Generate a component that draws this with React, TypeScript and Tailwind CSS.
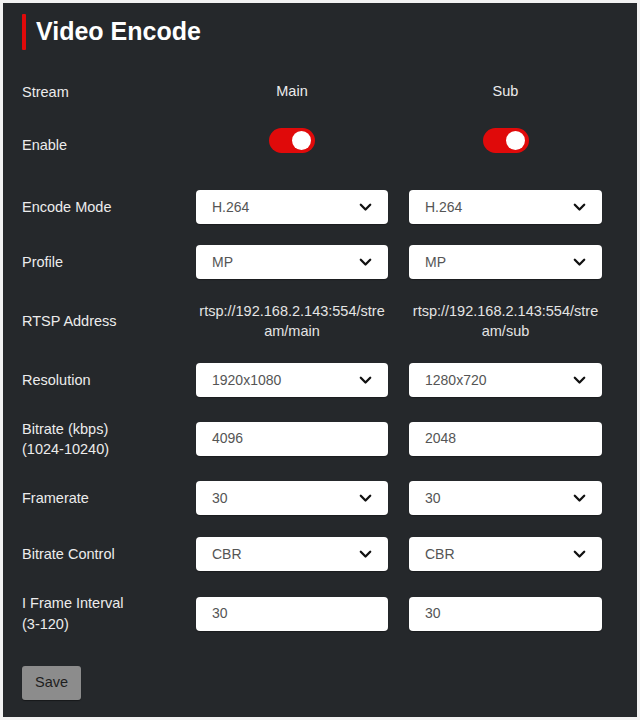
import React from "react";

const font = { fontFamily: '"Liberation Sans", Arial, sans-serif' };

function Chevron() {
  return (
    <svg width="13" height="9" viewBox="0 0 13 9" className="shrink-0">
      <path d="M1.8 1.8 L6.5 6.5 L11.2 1.8" fill="none" stroke="#111" strokeWidth="2.3" strokeLinecap="round" strokeLinejoin="round" />
    </svg>
  );
}

function Select({ value }: { value: string }) {
  return (
    <div className="h-[34px] bg-white rounded-[4px] flex items-center justify-between pl-4 pr-[16px] text-[14px] text-[#555] shadow-[0_1px_1px_rgba(0,0,0,0.3)]">
      <span>{value}</span>
      <Chevron />
    </div>
  );
}

function Input({ value }: { value: string }) {
  return (
    <div className="h-[34px] bg-white rounded-[4px] flex items-center pl-4 text-[14px] text-[#555] shadow-[0_1px_1px_rgba(0,0,0,0.3)]">
      <span className="-mt-[2px]">{value}</span>
    </div>
  );
}

function Toggle() {
  return (
    <div className="w-[46px] h-[25px] rounded-full bg-[#e00a0a] flex items-center justify-end pr-[4px]">
      <div className="w-[19px] h-[19px] rounded-full bg-white" />
    </div>
  );
}

function Row({ label, children, className = "" }: { label: React.ReactNode; children: React.ReactNode; className?: string }) {
  return (
    <div className={"grid grid-cols-[153px_192px_193px] gap-x-[21px] items-center " + className}>
      <div className="text-[14.5px] leading-[20px] text-[#ececec]">{label}</div>
      {children}
    </div>
  );
}

export default function App() {
  return (
    <div className="bg-[#f2f2f2] p-[3px] w-[640px] h-[720px]" style={font}>
      <div className="bg-[#25282b] h-[714px] px-[19px] flex flex-col">
        <div className="flex items-center mt-[11px] h-[36px]">
          <div className="w-[4px] h-[36px] bg-[#e00a0a] rounded-[1px]" />
          <div className="ml-[10px] text-[25px] font-bold text-white leading-none -mt-[1px]">Video Encode</div>
        </div>

        <Row label="Stream" className="mt-[25px] h-[34px]">
          <div className="text-center text-[14.5px] text-[#ececec]">Main</div>
          <div className="text-center text-[14.5px] text-[#ececec]">Sub</div>
        </Row>

        <Row label="Enable" className="mt-[19px] h-[34px]">
          <div className="flex justify-center self-start -ml-[1px]">
            <Toggle />
          </div>
          <div className="flex justify-center self-start">
            <Toggle />
          </div>
        </Row>

        <Row label="Encode Mode" className="mt-[28px] h-[34px]">
          <Select value="H.264" />
          <Select value="H.264" />
        </Row>

        <Row label="Profile" className="mt-[21px] h-[34px]">
          <Select value="MP" />
          <Select value="MP" />
        </Row>

        <Row label="RTSP Address" className="mt-[22px] h-[40px]">
          <div className="text-center text-[14.5px] leading-[20px] text-[#e4e4e4] break-all">rtsp://192.168.2.143:554/stream/main</div>
          <div className="text-center text-[14.5px] leading-[20px] text-[#e4e4e4] break-all">rtsp://192.168.2.143:554/stream/sub</div>
        </Row>

        <Row label="Resolution" className="mt-[22px] h-[34px]">
          <Select value="1920x1080" />
          <Select value="1280x720" />
        </Row>

        <Row label={<>Bitrate (kbps)<br />(1024-10240)</>} className="mt-[22px] h-[40px]">
          <Input value="4096" />
          <Input value="2048" />
        </Row>

        <Row label="Framerate" className="mt-[22px] h-[34px]">
          <Select value="30" />
          <Select value="30" />
        </Row>

        <Row label="Bitrate Control" className="mt-[22px] h-[34px]">
          <Select value="CBR" />
          <Select value="CBR" />
        </Row>

        <Row label={<span className="block leading-[21px]">I Frame Interval<br />(3-120)</span>} className="mt-[22px] h-[42px]">
          <Input value="30" />
          <Input value="30" />
        </Row>

        <div className="mt-[31px]">
          <button className="w-[59px] h-[34px] bg-[#8c8c8c] rounded-[3px] text-[14.5px] text-[#1e1e1e] flex items-center justify-center shadow-[0_1px_1px_rgba(0,0,0,0.4)]">
            Save
          </button>
        </div>
      </div>
    </div>
  );
}
